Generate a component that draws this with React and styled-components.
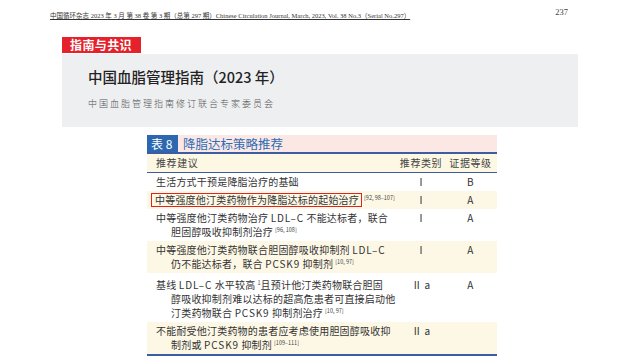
import styled, { createGlobalStyle } from 'styled-components'

const GlobalStyle = createGlobalStyle`
  html, body {
    margin: 0;
    padding: 0;
    background: #fff;
  }
  body {
    font-family: "Noto Sans CJK SC", "Noto Sans", sans-serif;
    color: #333;
  }
`

const Page = styled.div`
  width: 640px;
  height: 360px;
  overflow: hidden;
  background: #fff;
`

const RunningHead = styled.div`
  display: flex;
  align-items: flex-end;
  height: 20px;
  padding-left: 50px;
  padding-right: 72px;
`

const HeadText = styled.span`
  font-family: "Liberation Serif", "Noto Sans CJK SC", serif;
  font-size: 6.5px;
  line-height: 9px;
  color: #333;
  text-decoration: underline;
  text-underline-offset: 1px;
  white-space: nowrap;
`

const PageNo = styled.span`
  margin-left: auto;
  margin-bottom: 3px;
  font-family: "Liberation Serif", serif;
  font-size: 8.5px;
  color: #444;
`

const Banner = styled.div`
  margin: 17px 0 0 62px;
  width: 516px;
`

const Tag = styled.div`
  width: fit-content;
  background: #e5212b;
  color: #fff;
  font-size: 12px;
  font-weight: 700;
  line-height: 16px;
  padding: 0 9px 0 8px;
  letter-spacing: 0.4px;
`

const TitleBox = styled.div`
  height: 73px;
  margin-top: 1px;
  background: #eeeff1;
  padding: 13px 0 0 26px;
  box-sizing: border-box;
`

const Title = styled.div`
  font-size: 14.5px;
  font-weight: 500;
  color: #222;
  line-height: 20px;
`

const Committee = styled.div`
  margin-top: 11px;
  font-size: 9px;
  font-weight: 300;
  letter-spacing: 2px;
  color: #555;
  line-height: 12px;
`

const Table = styled.div`
  width: 350px;
  margin: 8px 0 0 147px;
  border-bottom: 2px solid #3d5da3;
`

const Caption = styled.div`
  display: flex;
  height: 17px;
  border-bottom: 2px solid #3d5da3;
  background: #fbe8e5;
`

const Badge = styled.div`
  background: #2c67b0;
  color: #fff;
  font-size: 12px;
  line-height: 17px;
  padding: 0 4px;
  width: 31px;
  box-sizing: border-box;
  white-space: nowrap;
`

const CaptionText = styled.div`
  color: #2f6cb4;
  font-size: 12.5px;
  line-height: 17px;
  padding-left: 5px;
`

const Row = styled.div`
  display: grid;
  grid-template-columns: 251px 46px 53px;
  background: ${({ stripe }) => (stripe ? '#fdf8e6' : '#fff')};
  font-size: 10px;
  line-height: 14px;
  letter-spacing: 0.2px;
  color: #333;
  padding: ${({ top }) => top || 2}px 0 2px;
`

const HeadRow = styled(Row)`
  background: #fdf8e4;
  padding: 2px 0;
  letter-spacing: 0.6px;
  color: #444;
  border-bottom: 1px solid #3d5da3;
`

const Advice = styled.div`
  padding-left: 24px;
  text-indent: -15px;
  white-space: nowrap;
`

const Latin = styled.span`
  letter-spacing: 0.9px;
`

const Mark = styled.span`
  display: inline-block;
  text-indent: 0;
  margin-left: -5px;
  line-height: 12px;
  padding: 0 2px 0 3px;
  border: 1.5px solid #e32219;
`

const Cell = styled.div`
  text-align: center;
`

const Sup = styled.sup`
  font-size: 5.5px;
  line-height: 0;
  vertical-align: 4px;
  margin-left: 2px;
  letter-spacing: 0;
  color: #444;
`

const App = () => {
  return (
    <Page>
      <GlobalStyle />
      <RunningHead>
        <HeadText>
          中国循环杂志 2023 年 3 月 第 38 卷 第 3 期（总第 297 期）Chinese Circulation Journal, March, 2023, Vol. 38 No.3（Serial No.297）
        </HeadText>
        <PageNo>237</PageNo>
      </RunningHead>
      <Banner>
        <Tag>指南与共识</Tag>
        <TitleBox>
          <Title>中国血脂管理指南（2023 年）</Title>
          <Committee>中国血脂管理指南修订联合专家委员会</Committee>
        </TitleBox>
      </Banner>
      <Table>
        <Caption>
          <Badge>表 8</Badge>
          <CaptionText>降脂达标策略推荐</CaptionText>
        </Caption>
        <HeadRow>
          <Advice>推荐建议</Advice>
          <Cell>推荐类别</Cell>
          <Cell>证据等级</Cell>
        </HeadRow>
        <Row>
          <Advice>生活方式干预是降脂治疗的基础</Advice>
          <Cell>Ⅰ</Cell>
          <Cell>B</Cell>
        </Row>
        <Row stripe>
          <Advice>
            <Mark>中等强度他汀类药物作为降脂达标的起始治疗</Mark>
            <Sup>[92, 98–107]</Sup>
          </Advice>
          <Cell>Ⅰ</Cell>
          <Cell>A</Cell>
        </Row>
        <Row>
          <Advice>
            中等强度他汀类药物治疗 <Latin>LDL–C</Latin> 不能达标者，联合<br />
            胆固醇吸收抑制剂治疗<Sup>[96, 108]</Sup>
          </Advice>
          <Cell>Ⅰ</Cell>
          <Cell>A</Cell>
        </Row>
        <Row stripe>
          <Advice>
            中等强度他汀类药物联合胆固醇吸收抑制剂 <Latin>LDL–C</Latin><br />
            仍不能达标者，联合 <Latin>PCSK9</Latin> 抑制剂<Sup>[10, 97]</Sup>
          </Advice>
          <Cell>Ⅰ</Cell>
          <Cell>A</Cell>
        </Row>
        <Row top={5}>
          <Advice>
            基线 <Latin>LDL–C</Latin> 水平较高<Sup>1</Sup>且预计他汀类药物联合胆固<br />
            醇吸收抑制剂难以达标的超高危患者可直接启动他<br />
            汀类药物联合 <Latin>PCSK9</Latin> 抑制剂治疗<Sup>[10, 97]</Sup>
          </Advice>
          <Cell>Ⅱ a</Cell>
          <Cell>A</Cell>
        </Row>
        <Row stripe>
          <Advice>
            不能耐受他汀类药物的患者应考虑使用胆固醇吸收抑<br />
            制剂或 <Latin>PCSK9</Latin> 抑制剂<Sup>[109–111]</Sup>
          </Advice>
          <Cell>Ⅱ a</Cell>
          <Cell></Cell>
        </Row>
      </Table>
    </Page>
  )
}

export default App
